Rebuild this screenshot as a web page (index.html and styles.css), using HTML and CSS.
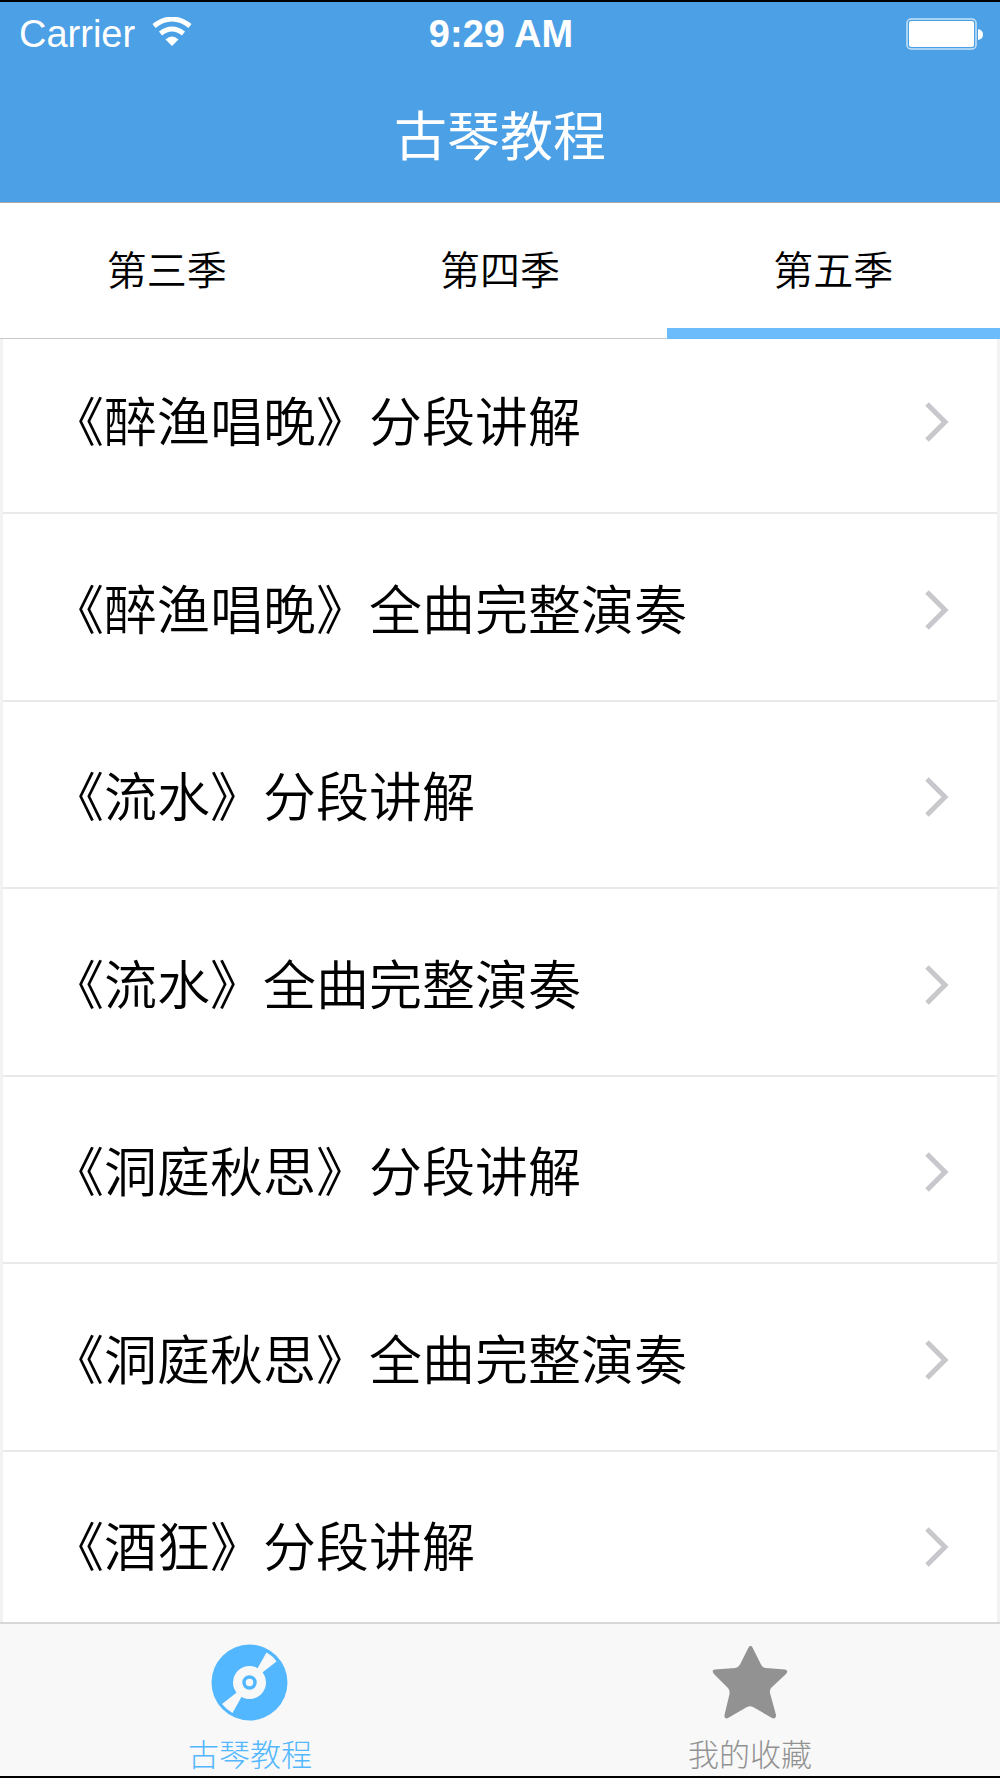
FILE: index.html
```html
<!DOCTYPE html>
<html lang="zh-CN">
<head>
<meta charset="utf-8">
<meta name="viewport" content="width=device-width, initial-scale=1">
<title>古琴教程</title>
<link rel="stylesheet" href="styles.css">
</head>
<body>
<svg class="symbols" aria-hidden="true">
  <symbol id="chevron" viewBox="0 0 26 40"><path d="M3 2 21 20 3 38"/></symbol>
</svg>
<div class="app">
  <header class="header">
    <div class="status">
      <div class="status-left">
        <span>Carrier</span>
        <svg class="wifi" viewBox="0 0 40 30" aria-hidden="true">
          <path d="M2 9Q20-5 38 9" fill="none" stroke="#fff" stroke-width="5"/>
          <path d="M8.500 16.500Q20 7.500 31.500 16.500" fill="none" stroke="#fff" stroke-width="5"/>
          <path d="M13.500 22.500Q20 16.500 26.500 22.500L20 29Z" fill="#fff"/>
        </svg>
      </div>
      <span class="time">9:29 AM</span>
      <div class="status-right">
        <svg class="battery" viewBox="0 0 78 32" aria-hidden="true">
          <rect x="2" y="1" width="69" height="30" rx="4" fill="none" stroke="#c9e2f8" stroke-width="1.500"/>
          <rect x="4" y="3" width="65" height="26" rx="2" fill="#fff"/>
          <path d="M73 11Q78 12 78 16.500T73 22Z" fill="#fff"/>
        </svg>
      </div>
    </div>
    <h1 class="title">古琴教程</h1>
  </header>
  <nav class="seasons">
    <button class="season" type="button">第三季</button>
    <button class="season" type="button">第四季</button>
    <button class="season active" type="button" aria-current="true">第五季</button>
  </nav>
  <main class="lessons">
    <ul class="lesson-list">
      <li><a class="lesson" href="#"><span class="name">《醉渔唱晚》分段讲解</span><svg class="chevron"><use href="#chevron"/></svg></a></li>
      <li><a class="lesson" href="#"><span class="name">《醉渔唱晚》全曲完整演奏</span><svg class="chevron"><use href="#chevron"/></svg></a></li>
      <li><a class="lesson" href="#"><span class="name">《流水》分段讲解</span><svg class="chevron"><use href="#chevron"/></svg></a></li>
      <li><a class="lesson" href="#"><span class="name">《流水》全曲完整演奏</span><svg class="chevron"><use href="#chevron"/></svg></a></li>
      <li><a class="lesson" href="#"><span class="name">《洞庭秋思》分段讲解</span><svg class="chevron"><use href="#chevron"/></svg></a></li>
      <li><a class="lesson" href="#"><span class="name">《洞庭秋思》全曲完整演奏</span><svg class="chevron"><use href="#chevron"/></svg></a></li>
      <li><a class="lesson" href="#"><span class="name">《酒狂》分段讲解</span><svg class="chevron"><use href="#chevron"/></svg></a></li>
    </ul>
  </main>
  <nav class="tabbar">
    <a class="tab current" href="#" aria-current="page">
      <svg class="tab-icon" viewBox="0 0 78 78" aria-hidden="true">
        <circle cx="38.500" cy="38.500" r="38" fill="#53b7ff"/>
        <path d="M38.500 38.500 55.500 8.500Q62 12 65.500 17.500ZM38.500 38.500 21.500 69Q15.500 65.500 11 60Z" fill="#f8f8f8"/>
        <circle cx="38.500" cy="38.500" r="16.500" fill="#f8f8f8"/>
        <circle cx="38.500" cy="38.500" r="5.500" fill="none" stroke="#53b7ff" stroke-width="3.500"/>
      </svg>
      <span>古琴教程</span>
    </a>
    <a class="tab" href="#">
      <svg class="tab-icon" viewBox="0 0 78 78" aria-hidden="true">
        <path d="M37.500 3.500Q39.500 0 41.500 3.500L50 20.500Q51 23.500 55 24L74 25.500Q78 26.500 75 30L60 44Q58.500 46 59 49L65 71Q65 75.500 61 74L42 63Q39 61.500 36 63L17 74Q13 75.500 13.500 71L18.500 50Q19 46 17 44L3 30Q0 26 4 25.500L24 24Q27.500 23.500 29 20.500Z" fill="#929292"/>
      </svg>
      <span>我的收藏</span>
    </a>
  </nav>
</div>
</body>
</html>
```
FILE: styles.css
```css
* {
  box-sizing: border-box;
}

body {
  margin: 0;
  background: #fff;
  color: #000;
  font-family: "Liberation Sans", "Noto Sans CJK SC", sans-serif;
}

.symbols {
  display: none;
}

.app {
  display: flex;
  flex-direction: column;
  height: 100vh;
  border-top: 2px solid #000;
  border-bottom: 2px solid #000;
}

.header {
  flex: none;
  padding-bottom: 24px;
  background: #4ca0e5;
  border-bottom: 1px solid #aaa;
  color: #fff;
}

.status {
  display: grid;
  grid-template-columns: 1fr auto 1fr;
  align-items: center;
  height: 64px;
  padding: 0 17px 0 19px;
  font-size: 38px;
  line-height: 44px;
}

.status-left {
  display: flex;
  align-items: center;
  gap: 17px;
}

.wifi {
  width: 40px;
  height: 30px;
  margin-bottom: 4px;
}

.time {
  font-weight: 700;
}

.status-right {
  display: flex;
  justify-content: flex-end;
}

.battery {
  width: 78px;
  height: 32px;
}

.title {
  margin: 0;
  padding-top: 32px;
  font-size: 53px;
  font-weight: 400;
  line-height: 80px;
  text-align: center;
}

.seasons {
  display: grid;
  grid-template-columns: repeat(3, 1fr);
  flex: none;
  height: 136px;
}

.season {
  padding: 0 0 6px;
  border: 0;
  background: #fff;
  box-shadow: inset 0 -1px #c8c8c8;
  color: #000;
  font-family: inherit;
  font-size: 40px;
  font-weight: 350;
}

.season.active {
  box-shadow: inset 0 -11px #6cbcfb;
}

.lessons {
  flex: 1;
  min-height: 0;
  overflow: hidden;
  border: solid #f2f2f2;
  border-width: 0 3px;
}

.lesson-list {
  margin: -12px 0 0;
  padding: 0;
  list-style: none;
}

.lesson {
  display: flex;
  align-items: center;
  justify-content: space-between;
  height: 187px;
  padding: 5px 47px 0 48px;
  border-bottom: 2px solid #e9e9e9;
  color: #000;
  font-size: 53px;
  font-weight: 350;
  text-decoration: none;
}

.name {
  padding-bottom: 6px;
}

li:nth-child(even) .lesson {
  height: 188px;
}

.chevron {
  width: 26px;
  height: 40px;
  fill: none;
  stroke: #c7c7cc;
  stroke-width: 5;
}

.tabbar {
  display: grid;
  grid-template-columns: 1fr 1fr;
  flex: none;
  height: 154px;
  border-top: 2px solid #d8d8d8;
  background: #f8f8f8;
}

.tab {
  display: flex;
  flex-direction: column;
  align-items: center;
  gap: 12px;
  padding-top: 20px;
  color: #929292;
  font-size: 31px;
  font-weight: 300;
  line-height: 44px;
  text-decoration: none;
}

.tab.current {
  color: #53b7ff;
}

.tab-icon {
  width: 78px;
  height: 78px;
}
```
